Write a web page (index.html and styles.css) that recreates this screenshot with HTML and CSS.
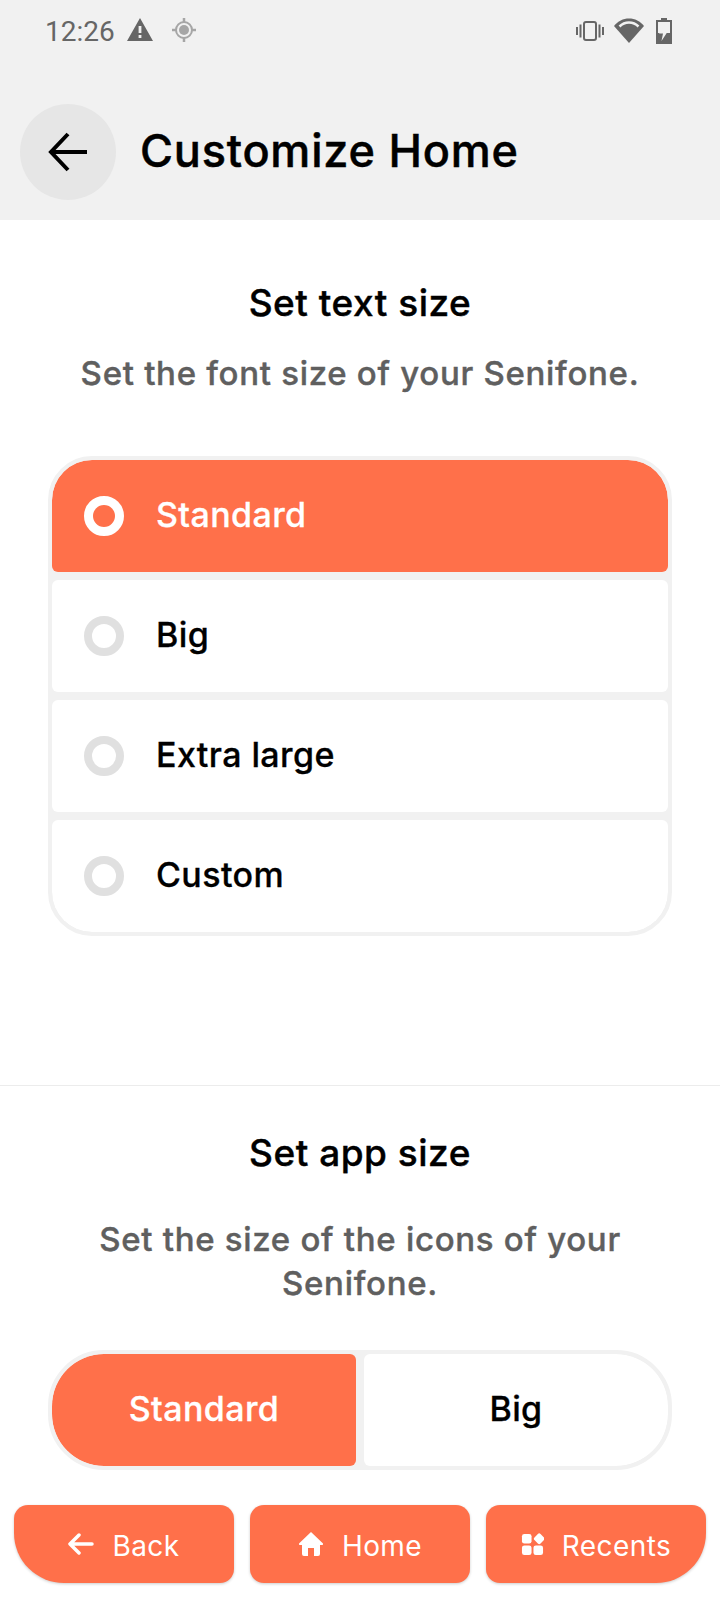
FILE: index.html
```html
<!DOCTYPE html>
<html lang="en">
<head>
    <meta charset="UTF-8">
    <meta name="viewport" content="width=device-width, initial-scale=1.0">
    <title>Customize Home</title>
    <link rel="stylesheet" href="styles.css">
</head>
<body>
    <header class="top">
        <div class="status-bar">
            <div class="status-left">
                <span class="clock">12:26</span>
                <svg class="alert-icon" viewBox="0 0 28 24"><path fill="#666" fill-rule="evenodd" d="M14 0 L27 23 H1 Z M12.6 8 V15 H15.4 V8 Z M12.6 17 V20 H15.4 V17 Z"/></svg>
                <svg class="gps-icon" viewBox="0 0 24 24"><circle cx="12" cy="12" r="8" fill="none" stroke="#a6a6a6" stroke-width="2"/><circle cx="12" cy="12" r="5" fill="#a6a6a6"/><path stroke="#a6a6a6" stroke-width="2.500" d="M12 0 V4 M12 20 V24 M0 12 H4 M20 12 H24"/></svg>
            </div>
            <div class="status-right">
                <svg class="vibrate-icon" viewBox="0 0 28 20"><path fill="#666" d="M0 6 H2 V14 H0 Z M3.5 3.5 H5.5 V16.5 H3.5 Z M22.5 3.5 H24.5 V16.5 H22.5 Z M26 6 H28 V14 H26 Z"/><rect x="8" y="1" width="12" height="18" rx="2" fill="none" stroke="#666" stroke-width="2"/></svg>
                <svg class="wifi-icon" viewBox="0 0 30 26"><path fill="#666" d="M15 25 L0 8 C4 3 9 0.500 15 0.500 S26 3 30 8 Z"/><path fill="none" stroke="#f1f1f1" stroke-width="2.500" d="M5.500 8.500 C8 6 11 4.500 15 4.500 S22 6 24.500 8.500"/></svg>
                <svg class="battery-icon" viewBox="0 0 16 26"><path fill="#666" fill-rule="evenodd" d="M5 0 H11 V2 H16 V26 H0 V2 H5 Z M2 4 V24 H14 V4 Z"/><path fill="#666" d="M2 15 H14 V24 H2 Z"/><path fill="#f1f1f1" d="M10 5 L3 15.500 H7 L5.500 23 L13 11.500 H9 Z"/></svg>
            </div>
        </div>
        <div class="app-bar">
            <button class="round-back">
                <svg viewBox="0 0 40 40" width="40" height="40"><path fill="none" stroke="#000" stroke-width="4" d="M39 20 H4 M20 2 L3 20 L20 38"/></svg>
            </button>
            <h1>Customize Home</h1>
        </div>
    </header>

    <main>
        <section class="text-size">
            <h2>Set text size</h2>
            <p class="hint">Set the font size of your Senifone.</p>
            <div class="option-list">
                <div class="option selected"><span class="radio"></span><span class="option-label">Standard</span></div>
                <div class="option"><span class="radio"></span><span class="option-label">Big</span></div>
                <div class="option"><span class="radio"></span><span class="option-label">Extra large</span></div>
                <div class="option"><span class="radio"></span><span class="option-label">Custom</span></div>
            </div>
        </section>

        <section class="app-size">
            <h2>Set app size</h2>
            <p class="hint">Set the size of the icons of your Senifone.</p>
            <div class="toggle">
                <div class="toggle-item selected">Standard</div>
                <div class="toggle-item">Big</div>
            </div>
        </section>
    </main>

    <nav class="bottom-nav">
        <button class="nav-btn nav-left">
            <svg viewBox="0 0 26 22" width="26" height="22"><path fill="none" stroke="#fff" stroke-width="3.500" stroke-linecap="round" stroke-linejoin="round" d="M24 11 H3 M11 2 L2 11 L11 20"/></svg>
            <span class="nav-label">Back</span>
        </button>
        <button class="nav-btn">
            <svg viewBox="0 0 26 26" width="26" height="26"><path fill="#fff" d="M13 1 L25 12.500 Q25.500 14 24 14 H22 V23 Q22 25 20 25 H16 V17 H10 V25 H6 Q4 25 4 23 V14 H2 Q0.500 14 1 12.500 Z"/></svg>
            <span class="nav-label">Home</span>
        </button>
        <button class="nav-btn nav-right">
            <svg viewBox="0 0 24 24" width="23" height="23"><rect x="1" y="1" width="10" height="10" rx="2.500" fill="#fff"/><rect x="14.500" y="1.500" width="9" height="9" rx="2" fill="#fff" transform="rotate(45 19 6)"/><rect x="1" y="13" width="10" height="10" rx="2.500" fill="#fff"/><rect x="13" y="13" width="10" height="10" rx="2.500" fill="#fff"/></svg>
            <span class="nav-label">Recents</span>
        </button>
    </nav>
</body>
</html>
```

FILE: styles.css
```css
body {
    font-family: "Inter", "Liberation Sans", sans-serif;
    background-color: #ffffff;
    margin: 0;
    width: 720px;
    height: 1600px;
    display: flex;
    flex-direction: column;
    overflow: hidden;
}
button {
    border: none;
    font-family: inherit;
    padding: 0;
}
.top {
    background: #f1f1f1;
    height: 220px;
    flex-shrink: 0;
}
.status-bar {
    height: 62px;
    padding: 0 48px 0 45px;
    display: flex;
    justify-content: space-between;
    align-items: center;
}
.status-left, .status-right {
    display: flex;
    align-items: center;
}
.clock {
    font-family: "Roboto", sans-serif;
    font-size: 28px;
    color: #666666;
}
.alert-icon {
    width: 28px;
    height: 24px;
    margin: 0 0 2px 11px;
}
.gps-icon {
    width: 24px;
    height: 24px;
    margin: 0 0 2px 18px;
}
.vibrate-icon {
    width: 28px;
    height: 20px;
}
.wifi-icon {
    width: 30px;
    height: 26px;
    margin-left: 10px;
}
.battery-icon {
    width: 16px;
    height: 26px;
    margin-left: 12px;
}
.app-bar {
    display: flex;
    align-items: center;
    padding: 42px 0 0 20px;
}
.round-back {
    width: 96px;
    height: 96px;
    border-radius: 50%;
    background: #e6e6e6;
    display: flex;
    align-items: center;
    justify-content: center;
}
.app-bar h1 {
    font-size: 45px;
    font-weight: 500;
    -webkit-text-stroke: 0.5px #000000;
    letter-spacing: 0.8px;
    line-height: 90px;
    color: #000000;
    margin: 0 0 2px 24px;
}
main {
    flex: 1;
}
section {
    text-align: center;
}
section h2 {
    font-size: 37px;
    font-weight: 500;
    -webkit-text-stroke: 0.4px #000000;
    letter-spacing: 0.5px;
    line-height: 44px;
    color: #000000;
    margin: 0;
}
.hint {
    font-size: 33px;
    font-weight: 500;
    -webkit-text-stroke: 0.4px #5f5f5f;
    letter-spacing: 0.7px;
    line-height: 44px;
    color: #5f5f5f;
    margin: 0;
}
.text-size {
    height: 866px;
    padding-top: 61px;
    box-sizing: border-box;
    border-bottom: 1px solid #ececec;
}
.text-size .hint {
    margin-top: 26px;
}
.option-list {
    margin: 61px 48px 0;
    border: 4px solid #f1f1f1;
    border-radius: 44px;
    background: #f1f1f1;
    display: flex;
    flex-direction: column;
    gap: 8px;
    overflow: hidden;
}
.option {
    height: 112px;
    box-sizing: border-box;
    background: #ffffff;
    border-radius: 6px;
    display: flex;
    align-items: center;
    padding-left: 32px;
    font-size: 34px;
    font-weight: 500;
    letter-spacing: 0.4px;
    color: #000000;
}
.option-label {
    padding-bottom: 3px;
    -webkit-text-stroke: 0.3px;
}
.option:first-child {
    border-top-left-radius: 40px;
    border-top-right-radius: 40px;
}
.option:last-child {
    border-bottom-left-radius: 40px;
    border-bottom-right-radius: 40px;
}
.option.selected {
    background: #ff704a;
    color: #ffffff;
}
.radio {
    width: 40px;
    height: 40px;
    box-sizing: border-box;
    border: 8px solid #e0e0e0;
    border-radius: 50%;
    margin-right: 32px;
}
.selected .radio {
    border-width: 9px;
    border-color: #ffffff;
}
.app-size {
    padding-top: 45px;
}
.app-size .hint {
    margin: 42px 60px 0;
}
.toggle {
    margin: 45px 48px 0;
    border: 4px solid #f1f1f1;
    border-radius: 56px;
    background: #f1f1f1;
    display: flex;
    gap: 8px;
    overflow: hidden;
}
.toggle-item {
    flex: 1;
    height: 112px;
    box-sizing: border-box;
    padding-bottom: 3px;
    background: #ffffff;
    border-radius: 6px;
    display: flex;
    align-items: center;
    justify-content: center;
    font-size: 34px;
    font-weight: 500;
    -webkit-text-stroke: 0.3px;
    letter-spacing: 0.4px;
    color: #000000;
}
.toggle-item:first-child {
    border-top-left-radius: 52px;
    border-bottom-left-radius: 52px;
}
.toggle-item:last-child {
    border-top-right-radius: 52px;
    border-bottom-right-radius: 52px;
}
.toggle-item.selected {
    background: #ff704a;
    color: #ffffff;
}
.bottom-nav {
    display: flex;
    gap: 16px;
    padding: 0 14px 17px;
    flex-shrink: 0;
}
.nav-btn {
    flex: 1;
    height: 78px;
    background: #ff704a;
    border-radius: 14px;
    box-shadow: 0 1px 3px rgba(0, 0, 0, 0.2);
    color: #ffffff;
    font-size: 28px;
    letter-spacing: 0.4px;
    display: flex;
    align-items: center;
    justify-content: center;
    gap: 18px;
}
.nav-label {
    padding-top: 3px;
}
.nav-left {
    border-bottom-left-radius: 50px;
}
.nav-right {
    border-bottom-right-radius: 50px;
}
```
